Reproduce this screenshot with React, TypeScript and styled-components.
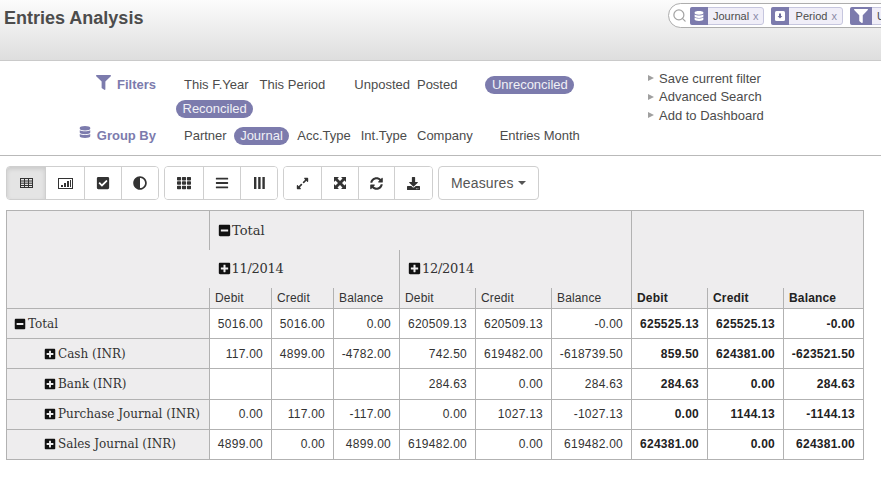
import { ReactNode } from "react";
import styled, { createGlobalStyle } from "styled-components";
import {
  FaAdjust,
  FaBars,
  FaCheckSquare,
  FaDatabase,
  FaDownload,
  FaExpandAlt,
  FaFilter,
  FaMinusSquare,
  FaPlusSquare,
  FaSyncAlt,
  FaTh,
} from "react-icons/fa";
import { Search } from "lucide-react";

const GlobalStyle = createGlobalStyle`
  html, body {
    margin: 0;
    padding: 0;
    background: #fff;
    overflow: hidden;
    font-family: "Liberation Sans", Arial, sans-serif;
  }
`;

const Page = styled.div`
  width: 881px;
  height: 477px;
  overflow: hidden;
`;

const Header = styled.header`
  display: flex;
  align-items: flex-start;
  height: 61px;
  padding: 3px 0 0 4px;
  box-sizing: border-box;
  background: linear-gradient(#fcfcfc, #dedede);
  border-bottom: 1px solid #cacaca;
`;

const Title = styled.h1`
  flex: 0 0 664px;
  margin: 4px 0 0;
  font-size: 18px;
  line-height: 22px;
  font-weight: bold;
  color: #4c4c4c;
`;

const SearchBox = styled.div`
  flex: 0 0 auto;
  display: flex;
  align-items: center;
  width: 300px;
  height: 25px;
  padding-left: 3px;
  box-sizing: border-box;
  background: #fff;
  border: 1px solid #adadad;
  border-radius: 13px 0 0 13px;
  color: #a4a4a4;
  svg.lens {
    margin-right: 3px;
  }
`;

const Facet = styled.div`
  display: flex;
  height: 18px;
  box-sizing: border-box;
  margin-right: 7px;
  border: 1px solid #c6c6de;
  border-radius: 3px;
  background: #f0eef8;
  font-size: 11px;
  line-height: 16px;
  color: #4c4c4c;
`;

const FacetIcon = styled.span<{ $width?: number }>`
  display: flex;
  align-items: center;
  justify-content: center;
  width: ${({ $width }) => $width ?? 18}px;
  margin: -1px 0 -1px -1px;
  background: #7c7bad;
  color: #fff;
  font-size: 10px;
  border-radius: 2px 0 0 2px;
`;

const FacetText = styled.span<{ $left?: number; $right?: number }>`
  padding: 0 ${({ $right }) => $right ?? 4}px 0 ${({ $left }) => $left ?? 5}px;
  white-space: nowrap;
  b {
    font-weight: normal;
    color: #8c8ca8;
    margin-left: 4px;
  }
`;

const Drawer = styled.section`
  display: flex;
  height: 95px;
  box-sizing: border-box;
  border-bottom: 1px solid #b9b9b9;
`;

const FilterGrid = styled.div`
  flex: 0 0 648px;
  padding-top: 15px;
`;

const Block = styled.div<{ $gap: number }>`
  display: flex;
  margin-bottom: ${({ $gap }) => $gap}px;
`;

const BlockLabel = styled.div`
  flex: 0 0 156px;
  display: flex;
  justify-content: flex-end;
  align-items: flex-start;
  gap: 6px;
  height: 18px;
  line-height: 18px;
  font-size: 13px;
  font-weight: bold;
  color: #7c7bad;
  svg {
    margin-top: -1px;
  }
`;

const BlockBody = styled.div`
  margin-left: 20px;
`;

const Line = styled.div<{ $gap?: number }>`
  display: flex;
  height: 18px;
  margin-bottom: ${({ $gap }) => $gap ?? 0}px;
`;

const Option = styled.span<{ $left: number; $active?: boolean }>`
  margin-left: ${({ $left }) => $left}px;
  padding: 0 ${({ $active }) => ($active ? 6.5 : 0)}px;
  border-radius: 9px;
  background: ${({ $active }) => ($active ? "#7c7bad" : "transparent")};
  color: ${({ $active }) => ($active ? "#f0f0f6" : "#4c4c4c")};
  font-size: 13px;
  line-height: 18px;
  white-space: nowrap;
`;

const Actions = styled.ul`
  list-style: none;
  margin: 8px 0 0;
  padding: 0;
`;

const Action = styled.li`
  display: flex;
  align-items: center;
  gap: 5px;
  height: 18.5px;
  font-size: 13px;
  color: #4c4c4c;
  white-space: nowrap;
  &::before {
    content: "";
    border-left: 6px solid #a0a0a0;
    border-top: 3px solid transparent;
    border-bottom: 3px solid transparent;
  }
`;

const Toolbar = styled.nav`
  display: flex;
  gap: 5px;
  margin: 10px 0 10px 6px;
`;

const Group = styled.div`
  display: flex;
  height: 34px;
  box-sizing: border-box;
  border: 1px solid #cfcfcf;
  border-radius: 4px;
  overflow: hidden;
`;

const ToolButton = styled.button<{ $width: number; $active?: boolean }>`
  display: flex;
  align-items: center;
  justify-content: center;
  width: ${({ $width }) => $width}px;
  padding: 0;
  border: 0;
  border-left: 1px solid #cfcfcf;
  background: ${({ $active }) => ($active ? "#e4e4e4" : "#fff")};
  box-shadow: ${({ $active }) => ($active ? "inset 0 2px 4px rgba(0,0,0,.12)" : "none")};
  color: #333;
  font-size: 14px;
  &:first-child {
    border-left: 0;
  }
`;

const MeasuresButton = styled.button`
  display: flex;
  align-items: center;
  gap: 4px;
  width: 101px;
  height: 34px;
  box-sizing: border-box;
  padding: 0 0 0 12px;
  border: 1px solid #cfcfcf;
  border-radius: 4px;
  background: #fff;
  color: #555;
  font-family: "Liberation Sans", Arial, sans-serif;
  font-size: 14px;
  letter-spacing: 0.15px;
  &::after {
    content: "";
    border-top: 4px solid #555;
    border-left: 4px solid transparent;
    border-right: 4px solid transparent;
  }
`;

const Pivot = styled.table`
  margin-left: 6px;
  width: 857px;
  table-layout: fixed;
  border-collapse: collapse;
  font-size: 12px;
  color: #333;
  border: 1px solid #b2b2b2;
`;

const HeadCell = styled.th<{ $line?: boolean; $height?: number; $strong?: boolean }>`
  height: ${({ $height }) => $height ?? 21}px;
  padding: 0 0 0 5px;
  box-sizing: border-box;
  background: #eeedee;
  text-align: left;
  vertical-align: middle;
  font-weight: ${({ $strong }) => ($strong ? "bold" : "normal")};
  font-size: 12px;
  letter-spacing: 0.15px;
  color: ${({ $strong }) => ($strong ? "#222" : "#333")};
  border-left: ${({ $line }) => ($line ? "1px solid #b2b2b2" : "0")};
`;

const TitleCell = styled(HeadCell)`
  font-family: "DejaVu Serif", serif;
  font-size: 13px;
  letter-spacing: 0;
  padding-left: 8px;
  white-space: nowrap;
  color: #333;
  svg {
    font-size: 13px;
    vertical-align: -2px;
    margin-right: 1px;
    color: #111;
  }
`;

const MonthCell = styled(TitleCell)`
  letter-spacing: -0.3px;
`;

const BodyRow = styled.tr<{ $height: number; $lift?: boolean }>`
  height: ${({ $height }) => $height}px;
  border-top: 1px solid #b2b2b2;
  td {
    padding-bottom: ${({ $lift }) => ($lift ? 2 : 0)}px;
  }
`;

const RowHead = styled.td<{ $indent: number }>`
  padding-left: ${({ $indent }) => $indent}px;
  background: #eeedee;
  font-family: "DejaVu Serif", serif;
  font-size: 12px;
  color: #333;
  white-space: nowrap;
  border-right: 1px solid #b2b2b2;
  svg {
    font-size: 12px;
    vertical-align: -2px;
    margin-right: 2px;
    color: #111;
  }
`;

const NumberCell = styled.td<{ $strong?: boolean }>`
  padding-right: 8px;
  text-align: right;
  white-space: nowrap;
  letter-spacing: 0.25px;
  font-weight: ${({ $strong }) => ($strong ? "bold" : "normal")};
  color: ${({ $strong }) => ($strong ? "#222" : "#333")};
  border-left: 1px solid #b2b2b2;
`;

const TableIcon = () => (
  <svg width="13" height="10" viewBox="0 0 13 10" fill="none" stroke="#333" strokeWidth="1">
    <rect x="0.5" y="0.5" width="12" height="9" />
    <path d="M0.5 3h12M0.5 5.2h12M0.5 7.5h12M4.5 0.5v9M8.5 0.5v9" />
  </svg>
);

const ChartIcon = () => (
  <svg width="15" height="11" viewBox="0 0 15 11" fill="#333">
    <path d="M0 0h15v11H0zM1 1v9h13V1z" fillRule="evenodd" />
    <rect x="3" y="7" width="2" height="2" />
    <rect x="6" y="5" width="2" height="4" />
    <rect x="9" y="3" width="2" height="6" />
    <rect x="12" y="2" width="1" height="7" />
  </svg>
);

const ColumnsIcon = () => (
  <svg width="11" height="12" viewBox="0 0 11 12" fill="#333">
    <rect x="0" y="0" width="2.4" height="12" />
    <rect x="4.2" y="0" width="2.4" height="12" />
    <rect x="8.4" y="0" width="2.4" height="12" />
  </svg>
);

const FullscreenIcon = () => (
  <svg width="12" height="12" viewBox="0 0 12 12" fill="#333">
    <path d="M0 0h5L3.5 1.5 6 4l2.5-2.5L7 0h5v5l-1.5-1.5L8 6l2.5 2.5L12 7v5H7l1.5-1.5L6 8l-2.5 2.5L5 12H0V7l1.5 1.5L4 6 1.5 3.5 0 5z" />
  </svg>
);

const PeriodIcon = () => (
  <svg width="10" height="10" viewBox="0 0 10 10">
    <rect width="10" height="10" rx="1.5" fill="#fff" />
    <path d="M4 2.5h2V5h1.4L5 7.6 2.6 5H4z" fill="#6a6a9a" />
  </svg>
);

type Item = { label: string; left: number; active?: boolean };

const filterLineOne: Item[] = [
  { label: "This F.Year", left: 8 },
  { label: "This Period", left: 11 },
  { label: "Unposted", left: 29 },
  { label: "Posted", left: 7 },
  { label: "Unreconciled", left: 28, active: true },
];

const groupByLine: Item[] = [
  { label: "Partner", left: 8 },
  { label: "Journal", left: 7, active: true },
  { label: "Acc.Type", left: 8 },
  { label: "Int.Type", left: 10 },
  { label: "Company", left: 10 },
  { label: "Entries Month", left: 27 },
];

const renderItems = (items: Item[]) =>
  items.map((item) => (
    <Option key={item.label} $left={item.left} $active={item.active}>
      {item.label}
    </Option>
  ));

const toolGroups: { width: number; icon: ReactNode; active?: boolean }[][] = [
  [
    { width: 38, icon: <TableIcon />, active: true },
    { width: 39, icon: <ChartIcon /> },
    { width: 37, icon: <FaCheckSquare /> },
    { width: 37, icon: <FaAdjust /> },
  ],
  [
    { width: 38, icon: <FaTh /> },
    { width: 37, icon: <FaBars /> },
    { width: 37, icon: <ColumnsIcon /> },
  ],
  [
    { width: 37, icon: <FaExpandAlt size={13} /> },
    { width: 37, icon: <FullscreenIcon /> },
    { width: 36, icon: <FaSyncAlt size={13} /> },
    { width: 38, icon: <FaDownload size={13} /> },
  ],
];

const rows: { label: string; height: number; lift?: boolean; values: string[] }[] = [
  {
    label: "Cash (INR)",
    height: 30,
    values: ["117.00", "4899.00", "-4782.00", "742.50", "619482.00", "-618739.50", "859.50", "624381.00", "-623521.50"],
  },
  {
    label: "Bank (INR)",
    height: 31,
    lift: true,
    values: ["", "", "", "284.63", "0.00", "284.63", "284.63", "0.00", "284.63"],
  },
  {
    label: "Purchase Journal (INR)",
    height: 30,
    lift: true,
    values: ["0.00", "117.00", "-117.00", "0.00", "1027.13", "-1027.13", "0.00", "1144.13", "-1144.13"],
  },
  {
    label: "Sales Journal (INR)",
    height: 30,
    lift: true,
    values: ["4899.00", "0.00", "4899.00", "619482.00", "0.00", "619482.00", "624381.00", "0.00", "624381.00"],
  },
];

const totals = ["5016.00", "5016.00", "0.00", "620509.13", "620509.13", "-0.00", "625525.13", "625525.13", "-0.00"];
const colWidths = [203, 62, 62, 66, 76, 76, 80, 76, 76, 80];
const measures = ["Debit", "Credit", "Balance"];

const renderNumbers = (values: string[]) =>
  values.map((value, i) => (
    <NumberCell key={i} $strong={i > 5}>
      {value}
    </NumberCell>
  ));

export default function App() {
  return (
    <Page>
      <GlobalStyle />
      <Header>
        <Title>Entries Analysis</Title>
        <SearchBox>
          <Search className="lens" size={15} strokeWidth={2} />
          <Facet>
            <FacetIcon>
              <FaDatabase />
            </FacetIcon>
            <FacetText>
              Journal<b>x</b>
            </FacetText>
          </Facet>
          <Facet>
            <FacetIcon>
              <PeriodIcon />
            </FacetIcon>
            <FacetText $left={7} $right={5}>
              Period<b>x</b>
            </FacetText>
          </Facet>
          <Facet>
            <FacetIcon $width={22}>
              <FaFilter size={14} />
            </FacetIcon>
            <FacetText>Unreconciled</FacetText>
          </Facet>
        </SearchBox>
      </Header>
      <Drawer>
        <FilterGrid>
          <Block $gap={9}>
            <BlockLabel>
              <FaFilter size={15} />
              Filters
            </BlockLabel>
            <BlockBody>
              <Line $gap={6}>{renderItems(filterLineOne)}</Line>
              <Line>
                <Option $left={0} $active>
                  Reconciled
                </Option>
              </Line>
            </BlockBody>
          </Block>
          <Block $gap={0}>
            <BlockLabel>
              <FaDatabase size={12} />
              Group By
            </BlockLabel>
            <BlockBody>
              <Line>{renderItems(groupByLine)}</Line>
            </BlockBody>
          </Block>
        </FilterGrid>
        <Actions>
          <Action>Save current filter</Action>
          <Action>Advanced Search</Action>
          <Action>Add to Dashboard</Action>
        </Actions>
      </Drawer>
      <Toolbar>
        {toolGroups.map((group, g) => (
          <Group key={g}>
            {group.map((tool, t) => (
              <ToolButton key={t} $width={tool.width} $active={tool.active}>
                {tool.icon}
              </ToolButton>
            ))}
          </Group>
        ))}
        <MeasuresButton>Measures</MeasuresButton>
      </Toolbar>
      <Pivot>
        <colgroup>
          {colWidths.map((width, i) => (
            <col key={i} style={{ width }} />
          ))}
        </colgroup>
        <thead>
          <tr>
            <HeadCell rowSpan={3} />
            <TitleCell colSpan={6} $line $height={39}>
              <FaMinusSquare />
              Total
            </TitleCell>
            <HeadCell colSpan={3} rowSpan={2} $line />
          </tr>
          <tr>
            <MonthCell colSpan={3} $height={38}>
              <FaPlusSquare />
              11/2014
            </MonthCell>
            <MonthCell colSpan={3} $line $height={38}>
              <FaPlusSquare />
              12/2014
            </MonthCell>
          </tr>
          <tr>
            {[0, 1, 2].flatMap((block) =>
              measures.map((name) => (
                <HeadCell key={block + name} $line $strong={block === 2}>
                  {name}
                </HeadCell>
              )),
            )}
          </tr>
        </thead>
        <tbody>
          <BodyRow $height={30}>
            <RowHead $indent={7}>
              <FaMinusSquare />
              Total
            </RowHead>
            {renderNumbers(totals)}
          </BodyRow>
          {rows.map((row) => (
            <BodyRow key={row.label} $height={row.height} $lift={row.lift}>
              <RowHead $indent={37}>
                <FaPlusSquare />
                {row.label}
              </RowHead>
              {renderNumbers(row.values)}
            </BodyRow>
          ))}
        </tbody>
      </Pivot>
    </Page>
  );
}
